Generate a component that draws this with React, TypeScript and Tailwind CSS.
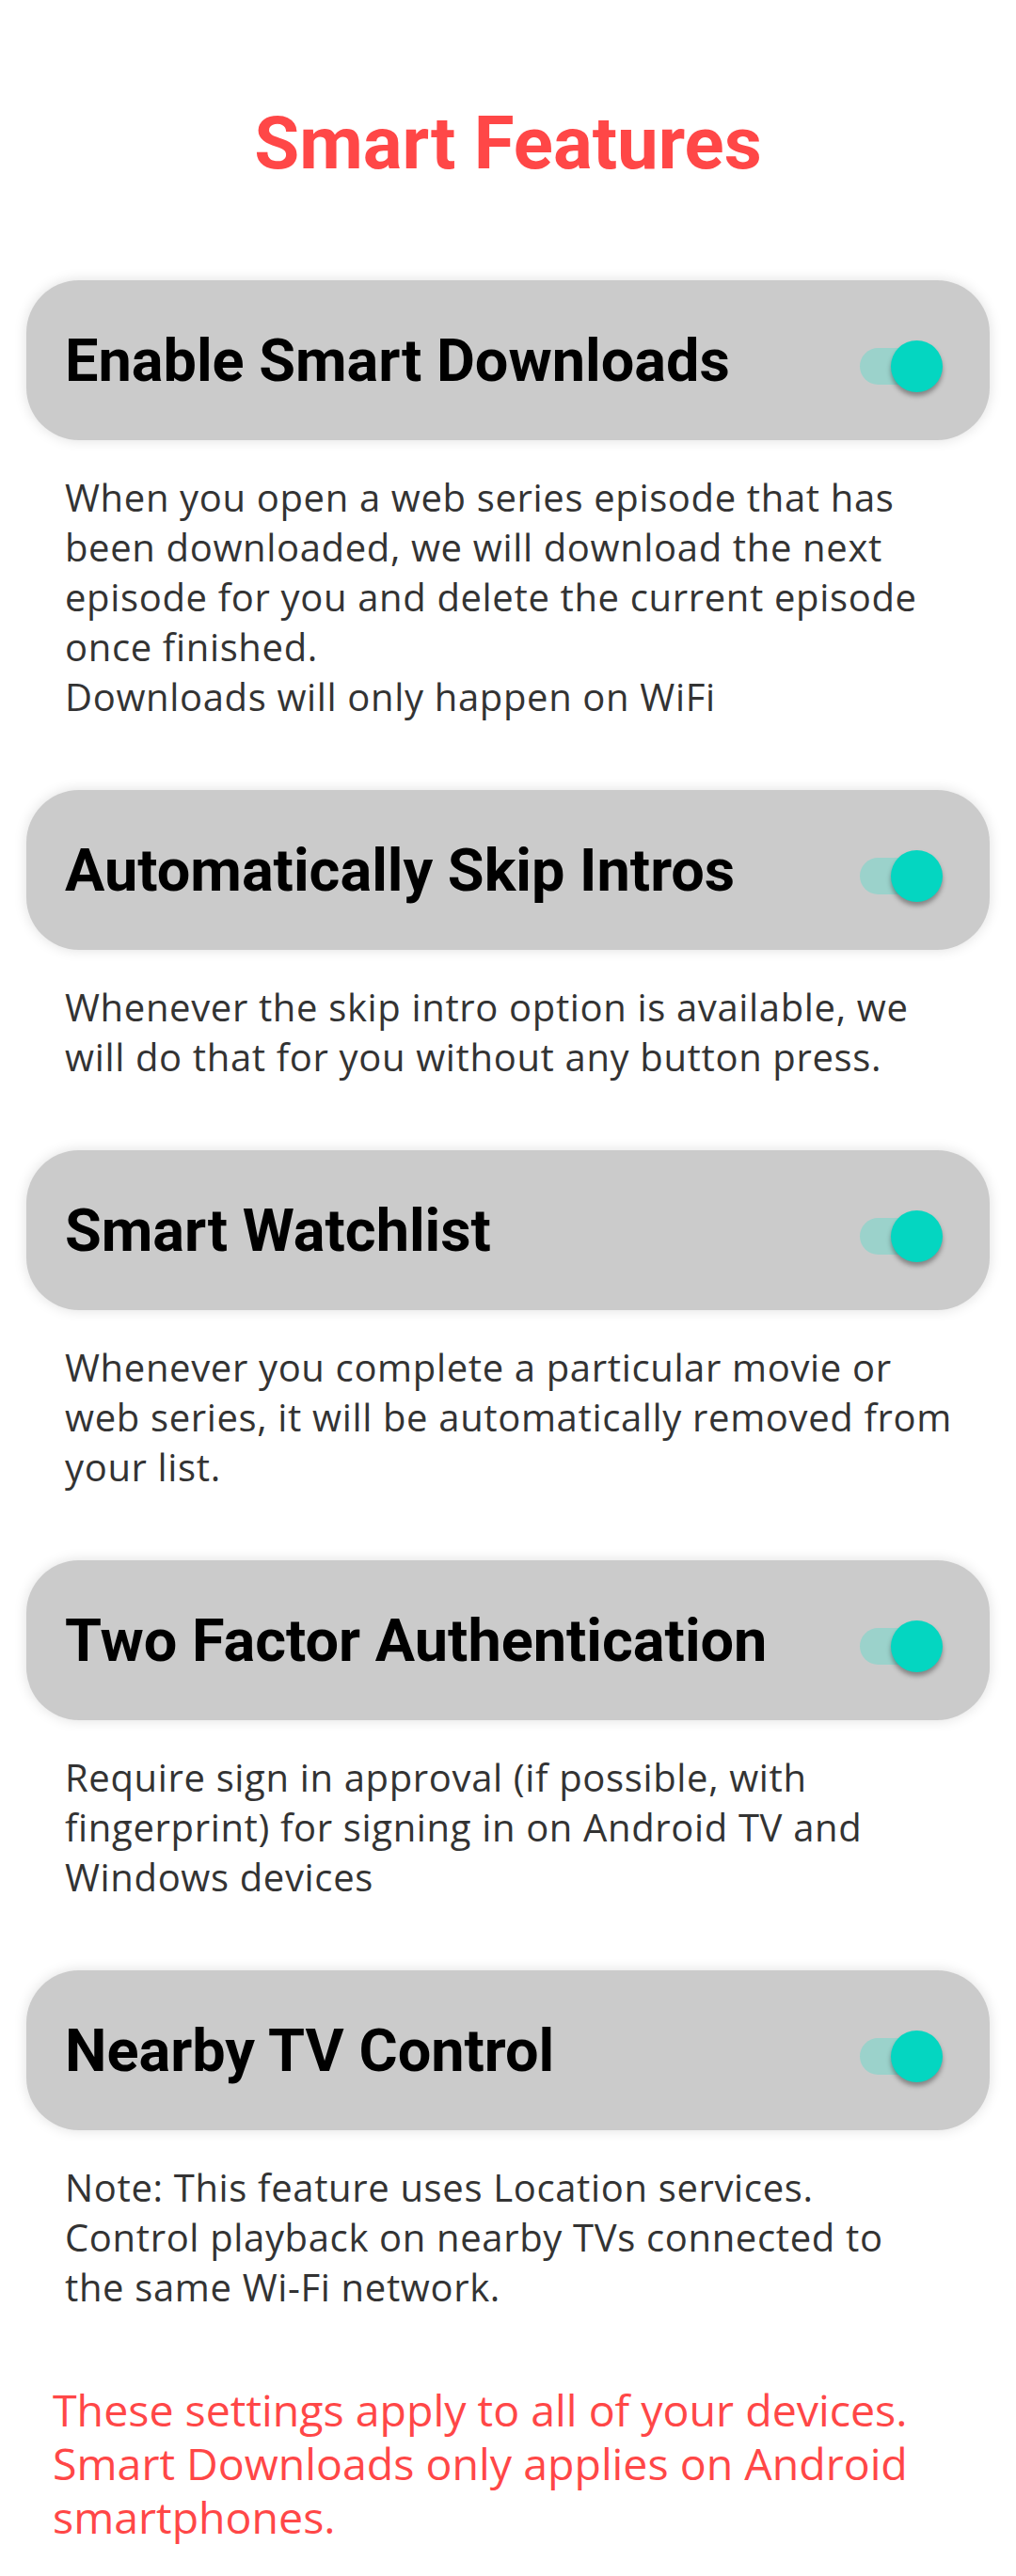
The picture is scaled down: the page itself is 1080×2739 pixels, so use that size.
const features = [
  {
    title: "Enable Smart Downloads",
    lines: [
      "When you open a web series episode that has",
      "been downloaded, we will download the next",
      "episode for you and delete the current episode",
      "once finished.",
      "Downloads will only happen on WiFi",
    ],
  },
  {
    title: "Automatically Skip Intros",
    lines: [
      "Whenever the skip intro option is available, we",
      "will do that for you without any button press.",
    ],
  },
  {
    title: "Smart Watchlist",
    lines: [
      "Whenever you complete a particular movie or",
      "web series, it will be automatically removed from",
      "your list.",
    ],
  },
  {
    title: "Two Factor Authentication",
    lines: [
      "Require sign in approval (if possible, with",
      "fingerprint) for signing in on Android TV and",
      "Windows devices",
    ],
  },
  {
    title: "Nearby TV Control",
    lines: [
      "Note: This feature uses Location services.",
      "Control playback on nearby TVs connected to",
      "the same Wi-Fi network.",
    ],
  },
];

function Toggle() {
  return (
    <div className="relative mt-[13px] h-[55px] w-[88px] shrink-0">
      <div className="absolute left-0 top-[8px] h-[39px] w-[72px] rounded-full bg-[#9bd2cb]" />
      <div className="absolute right-0 top-0 h-[55px] w-[55px] rounded-full bg-[#04d6c1] shadow-[0_4px_5px_rgba(0,0,0,0.35)]" />
    </div>
  );
}

export default function App() {
  return (
    <main className="min-h-[2739px] w-full bg-white pt-[114px] font-['Roboto',sans-serif]">
      <h1 className="text-center text-[78px] font-bold leading-none text-[#ff4747]">
        Smart Features
      </h1>

      <div className="mt-[106px] flex flex-col">
        {features.map((f, i) => (
          <section key={f.title} className={i > 0 ? "mt-[73px]" : ""}>
            <div className="ml-[28px] flex h-[170px] w-[1024px] items-center justify-between rounded-[56px] bg-[#cbcbcb] pl-[41px] pr-[50px] shadow-[0_0_14px_rgba(0,0,0,0.13)]">
              <h2 className="text-[63px] font-bold leading-none text-black">{f.title}</h2>
              <Toggle />
            </div>
            <div className="mt-[34px] whitespace-nowrap pl-[69px] font-['Open_Sans',sans-serif] text-[40px] leading-[53px] tracking-[0.65px] text-[#333333]">
              {f.lines.map((line, j) => (
                <p key={j}>{line}</p>
              ))}
            </div>
          </section>
        ))}
      </div>

      <div className="mt-[76px] whitespace-nowrap pl-[56px] font-['Open_Sans',sans-serif] text-[46.5px] leading-[57px] text-[#ff4747]">
        <p>These settings apply to all of your devices.</p>
        <p>Smart Downloads only applies on Android</p>
        <p>smartphones.</p>
      </div>
    </main>
  );
}
